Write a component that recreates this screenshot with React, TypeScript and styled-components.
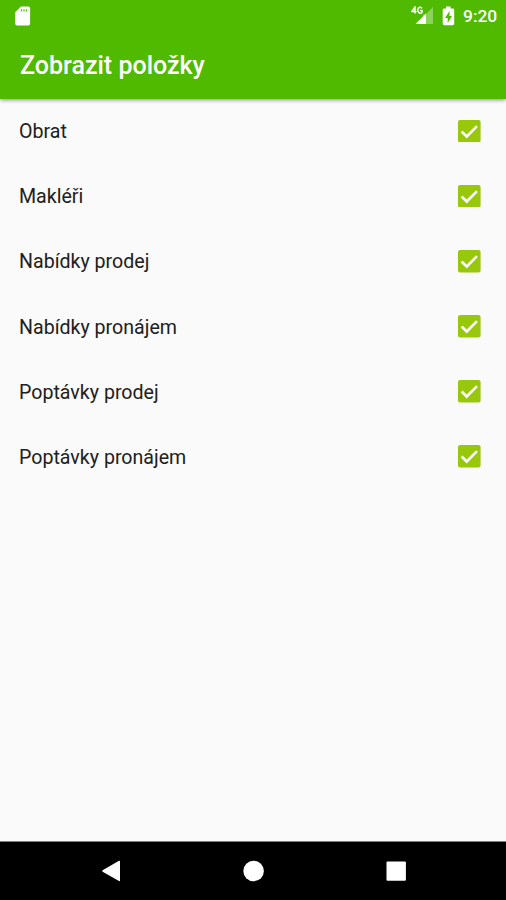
import React, { useState } from "react";
import styled, { createGlobalStyle } from "styled-components";

const GlobalStyle = createGlobalStyle`
  * { box-sizing: border-box; }
  body { margin: 0; font-family: Roboto, "Noto Sans", sans-serif; }
`;

const Screen = styled.div`
  display: flex;
  flex-direction: column;
  width: 506px;
  height: 900px;
  overflow: hidden;
  background: #fafafa;
`;

const Header = styled.header`
  flex: none;
  height: 99px;
  background: #4fba00;
  box-shadow: 0 1px 4px rgba(0, 0, 0, 0.45);
`;

const StatusBar = styled.div`
  display: flex;
  align-items: center;
  height: 31px;
  padding: 0 9px 0 14px;
`;

const StatusGroup = styled.div`
  display: flex;
  align-items: center;
  margin-left: auto;
`;

const Icon = styled.svg`
  display: block;
  flex: none;
`;

const BatteryIcon = styled(Icon)`
  margin-left: 8px;
`;

const Clock = styled.span`
  width: 34px;
  margin-left: 8px;
  padding-top: 1px;
  color: #fff;
  font-size: 17.4px;
  font-weight: 500;
  line-height: 31px;
  white-space: nowrap;
`;

const Title = styled.h1`
  margin: 0;
  padding: 0 20px;
  color: #fff;
  font-size: 25px;
  font-weight: 500;
  line-height: 70px;
`;

const List = styled.main`
  flex: 1;
`;

const Row = styled.label`
  display: flex;
  align-items: center;
  justify-content: space-between;
  height: 65.2px;
  padding: 0 25.5px 0 19px;
  color: #202020;
  font-size: 19.6px;
`;

const Check = styled.input`
  appearance: none;
  width: 0;
  height: 0;
  margin: 0 0 0 auto;
`;

const CheckIcon = styled(Icon)`
  margin-bottom: 1.5px;
`;

const NavBar = styled.nav`
  display: flex;
  align-items: center;
  justify-content: space-between;
  flex: none;
  height: 59px;
  padding: 0 99px 0 100px;
  border-top: 1px solid #808080;
  background: #000;
`;

const NavButton = styled.button`
  padding: 0;
  border: 0;
  background: none;
`;

function Item({ label }: { label: string }) {
  const [checked, setChecked] = useState(true);
  return (
    <Row>
      {label}
      <Check type="checkbox" checked={checked} onChange={() => setChecked(!checked)} />
      <CheckIcon width="22.6" height="22.6" viewBox="0 0 22 22">
        {checked ? (
          <>
            <rect width="22" height="22" rx="2" fill="#98c80c" />
            <path d="M3.5 11.2l5 4.9L18.5 6" fill="none" stroke="#fafafa" strokeWidth="2.6" />
          </>
        ) : (
          <rect x="1" y="1" width="20" height="20" rx="2" fill="none" stroke="#757575" strokeWidth="2" />
        )}
      </CheckIcon>
    </Row>
  );
}

const items = [
  "Obrat",
  "Makléři",
  "Nabídky prodej",
  "Nabídky pronájem",
  "Poptávky prodej",
  "Poptávky pronájem",
];

export default function App() {
  return (
    <Screen>
      <GlobalStyle />
      <Header>
        <StatusBar>
          <Icon width="18" height="20" viewBox="0 0 18 20">
            <path d="M7 .5h7.3a1.8 1.8 0 0 1 1.8 1.8v15.4a1.8 1.8 0 0 1-1.8 1.8H3a1.8 1.8 0 0 1-1.8-1.8V6.2z" fill="#fff" />
            <path d="M7.5 3.2v2.4M10 3.2v2.4M12.5 3.2v2.4" stroke="#4fba00" strokeWidth="1.2" />
          </Icon>
          <StatusGroup>
            <Icon width="23" height="19" viewBox="0 0 23 19">
              <path d="M22 1v17H5l7-7V8.5h2.5z" fill="#fff" opacity=".35" />
              <path d="M4.5 18L15 7.5V18z" fill="#fff" />
              <path d="M4 7.5V1L.8 5.6H5.5M11 2.3C9 .3 6.8 1.4 6.8 4.2S9.3 8 11 6.5V4.4H9.2" fill="none" stroke="#fff" strokeWidth="1.5" />
            </Icon>
            <BatteryIcon width="13" height="20" viewBox="0 0 13 20">
              <path d="M4 .5h4.5v2h2.3a1.4 1.4 0 0 1 1.4 1.4v13.9a1.4 1.4 0 0 1-1.4 1.4H2.1a1.4 1.4 0 0 1-1.4-1.4V3.9a1.4 1.4 0 0 1 1.4-1.4H4z" fill="#fff" />
              <path d="M7.5 5L3 12h2.7v5L10 10H7.5z" fill="#4fba00" />
            </BatteryIcon>
            <Clock>9:20</Clock>
          </StatusGroup>
        </StatusBar>
        <Title>Zobrazit položky</Title>
      </Header>
      <List>
        {items.map((label) => (
          <Item key={label} label={label} />
        ))}
      </List>
      <NavBar>
        <NavButton aria-label="Zpět">
          <Icon width="22" height="22" viewBox="0 0 22 22">
            <path d="M2.6 10.2L19 .7q1-.3 1 .7v19q0 1-1 .7L2.6 11.7q-1-.7 0-1.5z" fill="#fff" />
          </Icon>
        </NavButton>
        <NavButton aria-label="Domů">
          <Icon width="22" height="22" viewBox="0 0 22 22">
            <circle cx="10.6" cy="11" r="10.3" fill="#fff" />
          </Icon>
        </NavButton>
        <NavButton aria-label="Přehled">
          <Icon width="22" height="22" viewBox="0 0 22 22">
            <rect x="1.5" y="1.5" width="19.4" height="19.2" rx="1" fill="#fff" />
          </Icon>
        </NavButton>
      </NavBar>
    </Screen>
  );
}
